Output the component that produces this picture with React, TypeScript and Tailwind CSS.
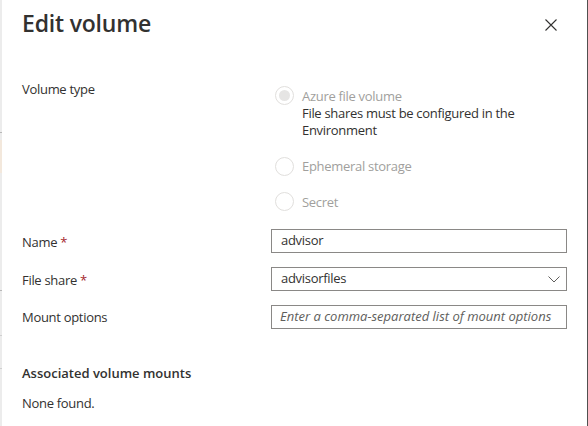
import React from "react";

function Radio({ checked }: { checked?: boolean }) {
  return (
    <span className="flex h-[19px] w-[19px] shrink-0 items-center justify-center rounded-full border border-[#e1dfdd] bg-white">
      {checked && <span className="h-[11px] w-[11px] rounded-full bg-[#e6e5e4]" />}
    </span>
  );
}

export default function App() {
  return (
    <div
      className="flex h-[426px] w-[588px] overflow-hidden bg-white text-[13px] tracking-[-0.3px] text-[#323130]"
      style={{ fontFamily: '"Open Sans", "Noto Sans", sans-serif' }}
    >
      {/* background page strip */}
      <div className="flex w-[2px] shrink-0 flex-col bg-[#ececec]">
        <div className="h-[132px]" />
        <div className="h-[1px] bg-[#b8b8b8]" />
        <div className="h-[7px]" />
        <div className="h-[33px] bg-[#f3e8dc]" />
        <div className="h-[117px]" />
        <div className="h-[1px] bg-[#b8b8b8]" />
        <div className="h-[44px]" />
        <div className="h-[1px] bg-[#d0d0d0]" />
        <div className="h-[32px]" />
        <div className="h-[1px] bg-[#d0d0d0]" />
      </div>

      <div className="flex flex-1 flex-col border-r border-[#505050] pl-[20px] pr-[20px]">
        {/* header */}
        <div className="mt-[9px] flex h-[28px] items-center justify-between">
          <h1 className="text-[23px] font-semibold leading-[28px] tracking-[-0.2px] text-[#323130]">Edit volume</h1>
          <button className="mr-[2px] mt-[3px] flex h-[28px] w-[28px] items-center justify-center text-[#323130]">
            <svg width="12" height="12" viewBox="0 0 12 12" fill="none" stroke="currentColor" strokeWidth="1.1">
              <path d="M0.5 0.5 L11.5 11.5 M11.5 0.5 L0.5 11.5" />
            </svg>
          </button>
        </div>

        {/* volume type */}
        <div className="mt-[49px] grid grid-cols-[249px_1fr]">
          <div className="-mt-[6px] leading-[18px]">Volume type</div>
          <div className="flex flex-col">
            <div className="flex items-start gap-[8px] pl-[4px]">
              <Radio checked />
              <div className="mt-[2px] leading-[17px]">
                <div className="text-[#a19f9d]">Azure file volume</div>
                <div>File shares must be configured in the</div>
                <div>Environment</div>
              </div>
            </div>
            <div className="mt-[18px] flex items-center gap-[8px] pl-[4px]">
              <Radio />
              <div className="leading-[17px] text-[#a19f9d]">Ephemeral storage</div>
            </div>
            <div className="mt-[16px] flex items-center gap-[8px] pl-[4px]">
              <Radio />
              <div className="mt-[1px] leading-[17px] text-[#a19f9d]">Secret</div>
            </div>
          </div>
        </div>

        {/* fields */}
        <div className="mt-[18px] flex flex-col gap-[14px]">
          <div className="grid grid-cols-[249px_1fr] items-center">
            <div className="mt-[3px]">
              Name <span className="text-[#a4262c]">*</span>
            </div>
            <div className="flex h-[24px] items-center border border-[#8a8886] px-[9px]">advisor</div>
          </div>
          <div className="grid grid-cols-[249px_1fr] items-center">
            <div className="mt-[3px]">
              File share <span className="text-[#a4262c]">*</span>
            </div>
            <div className="flex h-[24px] items-center justify-between border border-[#8a8886] pl-[9px] pr-[6px]">
              <span>advisorfiles</span>
              <svg width="12" height="7" viewBox="0 0 12 7" fill="none" stroke="#605e5c" strokeWidth="1">
                <path d="M0.5 0.5 L6 6 L11.5 0.5" />
              </svg>
            </div>
          </div>
          <div className="grid grid-cols-[249px_1fr] items-center">
            <div className="mt-[2px]">Mount options</div>
            <div className="flex h-[24px] items-center overflow-hidden whitespace-nowrap border border-[#8a8886] px-[8px] italic tracking-normal text-[#605e5c]">
              Enter a comma-separated list of mount options
            </div>
          </div>
        </div>

        <div className="mt-[35px] font-semibold leading-[18px] tracking-normal">Associated volume mounts</div>
        <div className="mt-[12px] leading-[18px]">None found.</div>
      </div>
    </div>
  );
}
